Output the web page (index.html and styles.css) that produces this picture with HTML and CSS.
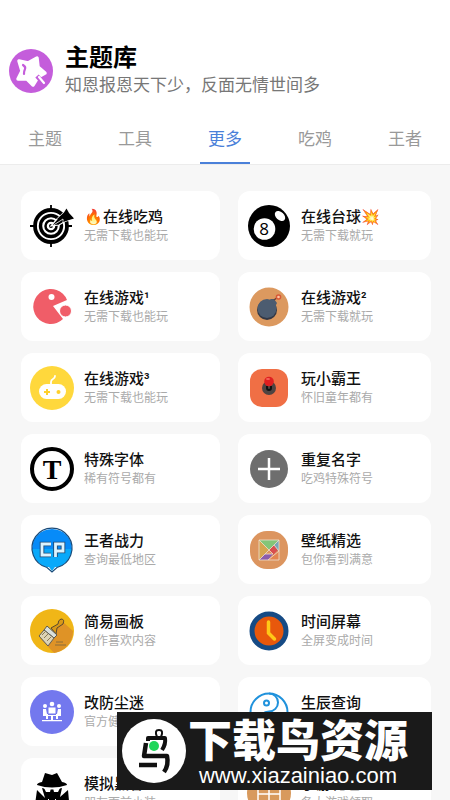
FILE: index.html
```html
<!DOCTYPE html>
<html lang="zh-CN">
<head>
<meta charset="utf-8">
<meta name="viewport" content="width=device-width, initial-scale=1">
<title>主题库</title>
<link rel="stylesheet" href="styles.css">
</head>
<body>
<header class="top">
  <div class="brand">
    <svg class="logo" viewBox="0 0 44 44" aria-hidden="true">
      <circle cx="22" cy="22" r="22" fill="#c45ddb"/>
      <path d="M28 9 29 18 36 24 29 28 24 36 18 30 9 30 13 22 10 12 19 14Z" fill="#fff" stroke="#fff" stroke-width="3.500" stroke-linejoin="round"/>
      <path d="M14 16q3 2 2 4t-1 5" fill="none" stroke="#c45ddb" stroke-width="2.200" stroke-linecap="round"/>
      <path d="M28 27l7 8" stroke="#c45ddb" stroke-width="4.500"/>
      <path d="M30 28l5 6" stroke="#fff" stroke-width="2.200" stroke-linecap="round"/>
    </svg>
    <div>
      <h1 class="title">主题库</h1>
      <p class="subtitle">知恩报恩天下少，反面无情世间多</p>
    </div>
  </div>
  <nav class="tabs">
    <a class="tab" href="#">主题</a>
    <a class="tab" href="#">工具</a>
    <a class="tab active" href="#" aria-current="page">更多</a>
    <a class="tab" href="#">吃鸡</a>
    <a class="tab" href="#">王者</a>
  </nav>
</header>
<main class="grid">
  <a class="card" href="#">
    <svg class="icon" viewBox="0 0 44 44" aria-hidden="true">
      <g fill="none" stroke="#000"><circle cx="21" cy="22" r="16" stroke-width="3.800"/><circle cx="21" cy="22" r="10.500" stroke-width="3.400"/><circle cx="21" cy="22" r="5.500" stroke-width="2.500"/><path d="M21 1v7M21 36v7M0 22h7M35 22h7" stroke-width="1.800"/></g>
      <circle cx="21" cy="22" r="2"/>
      <path d="M21 22 27 15 34 8.500 36.500 4.500 39 9 44 14.500 39.500 16 35 17.500 29 21Z" stroke="#fff" stroke-width="1.200"/><path d="M27 15 34 8.500 36.500 4.500 39 9 44 14.500 39 16 33 18Z"/><path d="m22 22 8-5 3-2v4" fill="none" stroke="#fff" stroke-width=".8"/>
    </svg>
    <div><h2 class="name">🔥在线吃鸡</h2><p class="desc">无需下载也能玩</p></div>
  </a>
  <a class="card" href="#">
    <svg class="icon" viewBox="0 0 44 44" aria-hidden="true">
      <circle cx="22" cy="22" r="21"/><circle cx="17.500" cy="25" r="10.800" fill="#fff"/><ellipse cx="33" cy="12" rx="6" ry="4" transform="rotate(42 33 12)" fill="#fff"/>
      <text x="17" y="31" class="ball-number" text-anchor="middle">8</text>
    </svg>
    <div><h2 class="name">在线台球💥</h2><p class="desc">无需下载就玩</p></div>
  </a>
  <a class="card" href="#">
    <svg class="icon" viewBox="0 0 44 44" aria-hidden="true">
      <path d="M37 15A17.500 17.500 0 1 0 33 34L23 21Z" fill="#f05d68"/><circle cx="21.500" cy="12" r="3" fill="#fff"/><circle cx="35.500" cy="26" r="6" fill="#f05d68" stroke="#fff"/>
    </svg>
    <div><h2 class="name">在线游戏¹</h2><p class="desc">无需下载也能玩</p></div>
  </a>
  <a class="card" href="#">
    <svg class="icon" viewBox="0 0 44 44" aria-hidden="true">
      <circle cx="22" cy="22" r="19.500" fill="#dc995f"/><circle cx="20" cy="25" r="10" fill="#333845"/><circle cx="20" cy="23.500" r="9.500" fill="#4c5c70"/><path d="m23 14 4 0 3 4-2 4Z" fill="#4c5c70"/><path d="m27 15 4-3" stroke="#653e3a" stroke-width="1.500"/><circle cx="31.500" cy="12" r="2.800" fill="#d95835"/><circle cx="31.500" cy="12" r="1.300" fill="#ffc6a5"/>
    </svg>
    <div><h2 class="name">在线游戏²</h2><p class="desc">无需下载就玩</p></div>
  </a>
  <a class="card" href="#">
    <svg class="icon" viewBox="0 0 44 44" aria-hidden="true">
      <circle cx="22" cy="22" r="22" fill="#ffd83c"/><rect x="9" y="18" width="27" height="15" rx="7.500" fill="#fff"/><path d="M21 18v-2q0-2 2-3 2-1 2-3" fill="none" stroke="#fff" stroke-width="1.800" stroke-linecap="round"/><path d="M14 26h6M17 23v6" stroke="#ffd02c" stroke-width="2"/><circle cx="28.500" cy="26" r="2" fill="#ffd02c"/>
    </svg>
    <div><h2 class="name">在线游戏³</h2><p class="desc">无需下载也能玩</p></div>
  </a>
  <a class="card" href="#">
    <svg class="icon" viewBox="0 0 44 44" aria-hidden="true">
      <rect x="3" y="3" width="38" height="38" rx="12" fill="#f06f45"/><circle cx="22" cy="22" r="7" fill="#4e4442"/><path d="M20 20v2q0 2 2 2t2-2v-2" fill="none" stroke="#111" stroke-width="2"/><circle cx="22" cy="15.500" r="4.800" fill="#df1f20"/><ellipse cx="21" cy="13" rx="2" ry="1" fill="#f6645b"/>
    </svg>
    <div><h2 class="name">玩小霸王</h2><p class="desc">怀旧童年都有</p></div>
  </a>
  <a class="card" href="#">
    <svg class="icon" viewBox="0 0 44 44" aria-hidden="true">
      <circle cx="22" cy="22" r="20" fill="#fff" stroke="#000" stroke-width="4"/><text x="22" y="32" class="letter" text-anchor="middle">T</text>
    </svg>
    <div><h2 class="name">特殊字体</h2><p class="desc">稀有符号都有</p></div>
  </a>
  <a class="card" href="#">
    <svg class="icon" viewBox="0 0 44 44" aria-hidden="true">
      <circle cx="22" cy="22" r="19" fill="#6e6e6e"/><path d="M11 22h22M22 11v22" stroke="#fff" stroke-width="2.500"/>
    </svg>
    <div><h2 class="name">重复名字</h2><p class="desc">吃鸡特殊符号</p></div>
  </a>
  <a class="card" href="#">
    <svg class="icon" viewBox="0 0 44 44" aria-hidden="true">
      <path d="M2 21a20 20 0 0 1 40 0Z" fill="#078bf8"/><path d="M2 21a20 20 0 0 0 14 18h3l3 4 3-4h3a20 20 0 0 0 14-18Z" fill="#09a9fa"/><path d="M17 39.500A20 20 0 1 1 27 39.500L22 44Z" fill="none" stroke="#194a78" stroke-width="1.200"/>
      <path d="M21 16h-9v11h9M25.500 29V16H33v7h-7" fill="none" stroke="#234c76" stroke-width="4.600"/><path d="M21 16h-9v11h9M25.500 29V16H33v7h-7" fill="none" stroke="#dcf4ff" stroke-width="2.800"/>
    </svg>
    <div><h2 class="name">王者战力</h2><p class="desc">查询最低地区</p></div>
  </a>
  <a class="card" href="#">
    <svg class="icon" viewBox="0 0 44 44" aria-hidden="true">
      <rect x="3" y="3" width="38" height="38" rx="17" fill="#dc955f"/><path d="M12 12h20L22 22Z" fill="#83c578"/><path d="M12 12 22 22 12 32Z" fill="#d5a550"/><path d="m22 22 5-5 4 5-5 5Z" fill="#d84f4f"/><path d="m27 17 5-5v12Z" fill="#78a6b8"/><path d="m12 32 6-6h8l-5 6Z" fill="#8b5dac"/><path d="M21 32 32 22v10Z" fill="#e38550"/><path d="M12 12h20v20H12Zl14 14M12 32l20-20M27 17l5 6-11 9M18 26h8" fill="none" stroke="#eedfcf" stroke-width=".8"/>
    </svg>
    <div><h2 class="name">壁纸精选</h2><p class="desc">包你看到满意</p></div>
  </a>
  <a class="card" href="#">
    <svg class="icon" viewBox="0 0 44 44" aria-hidden="true">
      <circle cx="22" cy="22" r="22" fill="#f0b617"/><path d="M33 13 43 22A22 22 0 0 1 24 44L10 29Z" fill="#df9326"/><path d="m21 19 7-4q0-4 3-5 4 0 2 5l-6 4-1 6Z" fill="#d99918" stroke="#59482f"/><path d="m17 17 10 9-3 3-10-8Z" fill="#dae0dc" stroke="#5b5b52"/><path d="m14 21 10 8-6 8-9-10Z" fill="#ddd4b5" stroke="#605e55"/><path d="m12 26 3-3M14 29l4-4M17 32l4-4M26 33h7M25 36h11" stroke="#74623f" stroke-width=".8"/>
    </svg>
    <div><h2 class="name">简易画板</h2><p class="desc">创作喜欢内容</p></div>
  </a>
  <a class="card" href="#">
    <svg class="icon" viewBox="0 0 44 44" aria-hidden="true">
      <circle cx="22" cy="22" r="17" fill="#e8580c" stroke="#164b85" stroke-width="5"/><path d="M21.500 13v11l6 6" fill="none" stroke="#ffc817" stroke-width="3.500" stroke-linecap="round"/>
    </svg>
    <div><h2 class="name">时间屏幕</h2><p class="desc">全屏变成时间</p></div>
  </a>
  <a class="card" href="#">
    <svg class="icon" viewBox="0 0 44 44" aria-hidden="true">
      <circle cx="22" cy="22" r="22" fill="#7378ee"/><g fill="#fff"><circle cx="22" cy="14" r="2.300"/><circle cx="15" cy="16" r="2"/><circle cx="29" cy="16" r="2"/><path d="M18.500 17.500h7v6h-7ZM13 19h3l1 5h1v5h-2v-3h-3ZM31 19h-3l-1 5h-1v5h2v-3h3ZM12 30h20v1.200H12Z"/><path d="M18 25h8v1h-8ZM21 26h2v4h-2Z"/></g>
    </svg>
    <div><h2 class="name">改防尘迷</h2><p class="desc">官方健康系统</p></div>
  </a>
  <a class="card" href="#">
    <svg class="icon" viewBox="0 0 44 44" aria-hidden="true">
      <g fill="none" stroke="#2092dc" stroke-width="2"><circle cx="22" cy="22" r="18.500"/><path d="M22 3.500a9 9 0 0 1 0 18 9 9 0 0 0 0 19"/><circle cx="19.500" cy="13" r="2.500"/><circle cx="23" cy="31" r="2.500"/></g>
    </svg>
    <div><h2 class="name">生辰查询</h2><p class="desc">生辰八字查询</p></div>
  </a>
  <a class="card" href="#">
    <svg class="icon" viewBox="0 0 44 44" aria-hidden="true">
      <path d="m12 11 3-9 7 2 5-2 5 9q5 1 5 3-15 5-30 0 0-2 5-3ZM12 17q10 3 20 0l-2 9 8-7 2 22H4l3-22 8 8Z"/><path d="M14 17h7l-1 4h-4ZM23 17h7l-2 4h-4Z" fill="#fff"/><path d="m18 28 4 4 4-4" fill="none" stroke="#fff"/>
    </svg>
    <div><h2 class="name">模拟黑客</h2><p class="desc">朋友面前小装</p></div>
  </a>
  <a class="card" href="#">
    <svg class="icon" viewBox="0 0 44 44" aria-hidden="true">
      <circle cx="22" cy="22" r="22" fill="#d89a5d"/><path d="M11 15h22v18H11Zm0 8h22M22 15v18M16 8q5 2 6 7 1-5 6-7" fill="none" stroke="#fff" stroke-width="1.500"/>
    </svg>
    <div><h2 class="name">手游礼包</h2><p class="desc">各大游戏领取</p></div>
  </a>
</main>
<aside class="banner">
  <svg class="seal" viewBox="0 0 64 64" aria-hidden="true">
    <circle cx="32" cy="32" r="32" fill="#fff"/>
    <g fill="none" stroke="#111" stroke-linejoin="round"><path d="M35 18q-3-7 2-7 5 0 2 7" stroke-width="2"/><path d="M26 22v-3h17q1 6-3 12" stroke-width="4"/><path d="M24 24l-2 13h23q2 9-3 16M17 46h18" stroke-width="4.500"/></g>
    <circle cx="32" cy="27" r="5" fill="#20d65a"/>
  </svg>
  <div class="banner-text"><strong class="banner-name">下载鸟资源</strong><span class="banner-url">www.xiazainiao.com</span></div>
</aside>
</body>
</html>
```
FILE: styles.css
```css
* { box-sizing: border-box; }
html { height: 100%; overflow: hidden; }
body {
  height: 100%;
  margin: 0;
  overflow: hidden;
  background: #f7f7f7;
  color: #111;
  font-family: Roboto, "Noto Sans CJK SC", sans-serif;
}
h1, h2, p { margin: 0; }
a { color: inherit; text-decoration: none; }
.top { background: #fff; padding-top: 44px; border-bottom: 1px solid #ececec; }
.brand { display: flex; align-items: center; gap: 12px; padding: 0 9px; }
.logo { width: 44px; height: 44px; flex: none; }
.title { font-size: 24px; line-height: 28px; font-weight: 700; color: #000; }
.subtitle { font-size: 17px; line-height: 26px; color: #777; }
.tabs { display: grid; grid-template-columns: repeat(5, 1fr); margin-top: 17px; }
.tab {
  justify-self: center;
  width: 50px;
  height: 49px;
  line-height: 48px;
  text-align: center;
  font-size: 17px;
  color: #999;
}
.tab.active { color: #4a80d9; border-bottom: 2px solid #4a80d9; }
.grid {
  display: grid;
  grid-template-columns: 199fr 193fr;
  gap: 12px 18px;
  padding: 26px 19px 12px 21px;
}
.card {
  display: flex;
  align-items: center;
  gap: 10px;
  height: 69px;
  padding: 0 9px;
  background: #fff;
  border-radius: 12px;
  white-space: nowrap;
}
.icon { width: 44px; height: 44px; flex: none; overflow: visible; }
.name { font-size: 15px; line-height: 20px; font-weight: 500; }
.desc { font-size: 12px; line-height: 18px; color: #aaa; }
.letter { font: bold 28px "Liberation Serif", serif; }
.ball-number { font: 17px "Open Sans", sans-serif; }
.banner {
  position: fixed;
  right: 18px;
  bottom: 10px;
  display: flex;
  align-items: center;
  gap: 2px;
  width: 315px;
  height: 78px;
  padding-left: 5px;
  background: #1a1a1a;
  color: #fff;
  white-space: nowrap;
}
.seal { width: 64px; height: 64px; flex: none; }
.banner-text { display: flex; flex-direction: column; align-items: center; padding-top: 6px; }
.banner-name { font-size: 44px; line-height: 44px; font-weight: 900; }
.banner-url { font: 22px/24px "Liberation Sans", sans-serif; }
```
